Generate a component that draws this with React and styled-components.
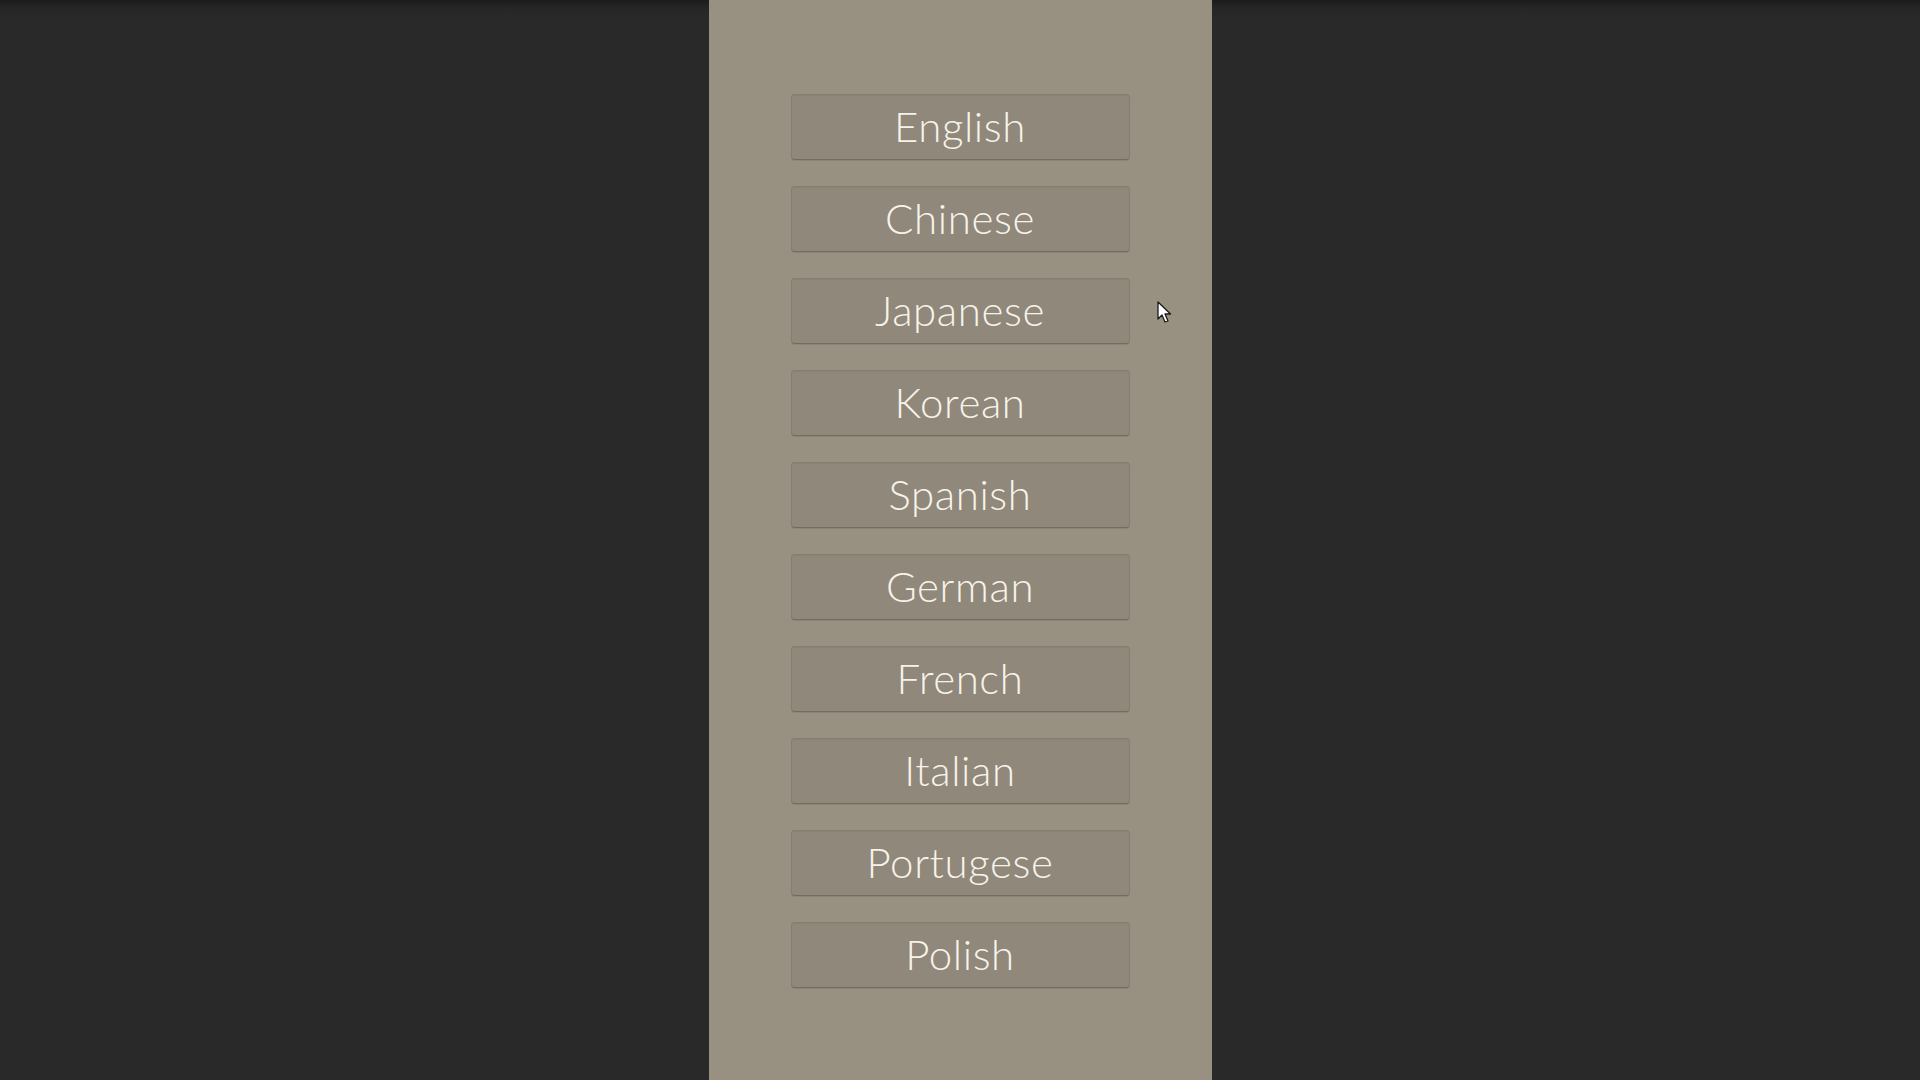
import React from "react";
import styled, { createGlobalStyle } from "styled-components";

const Global = createGlobalStyle`
  html, body { margin: 0; padding: 0; height: 100%; }
  body {
    background: #292929;
    font-family: "Lato", "Noto Sans", sans-serif;
    overflow: hidden;
  }
`;

const Screen = styled.div`
  position: relative;
  width: 1920px;
  height: 1080px;
  display: flex;
  justify-content: center;
  background: linear-gradient(to bottom, #1c1c1c 0px, #262626 8px, #292929 18px);
`;

const Panel = styled.div`
  width: 503px;
  height: 1080px;
  background: #989081;
  display: flex;
  flex-direction: column;
  align-items: center;
  padding-top: 94px;
  box-sizing: border-box;
  gap: 26px;
`;

const LangButton = styled.button`
  width: 339px;
  height: 66px;
  box-sizing: border-box;
  background: #8f887b;
  border: 1px solid #857d70;
  border-bottom-color: #746c60;
  border-radius: 4px;
  box-shadow: 0 1px 0 rgba(0, 0, 0, 0.08), inset 0 1px 0 rgba(0, 0, 0, 0.03);
  color: #f8f3ea;
  font-family: "Lato", "Noto Sans", sans-serif;
  font-weight: 300;
  font-size: 42px;
  letter-spacing: 0.6px;
  line-height: 1;
  display: flex;
  align-items: center;
  justify-content: center;
  padding: 0 0 2px;
  cursor: pointer;
`;

const Cursor = styled.svg`
  position: absolute;
  left: 1157px;
  top: 301px;
  width: 17px;
  height: 24px;
`;

const languages = [
  "English",
  "Chinese",
  "Japanese",
  "Korean",
  "Spanish",
  "German",
  "French",
  "Italian",
  "Portugese",
  "Polish",
];

export default function App() {
  return (
    <>
      <Global />
      <Screen>
        <Panel>
          {languages.map((l) => (
            <LangButton key={l}>{l}</LangButton>
          ))}
        </Panel>
        <Cursor viewBox="0 0 17 24">
          <path
            d="M1 1 L1 18 L5 14 L8 21 L11 20 L8 13 L13.5 13 Z"
            fill="#ffffff"
            stroke="#1a1a1a"
            strokeWidth="1.3"
            strokeLinejoin="round"
          />
        </Cursor>
      </Screen>
    </>
  );
}
